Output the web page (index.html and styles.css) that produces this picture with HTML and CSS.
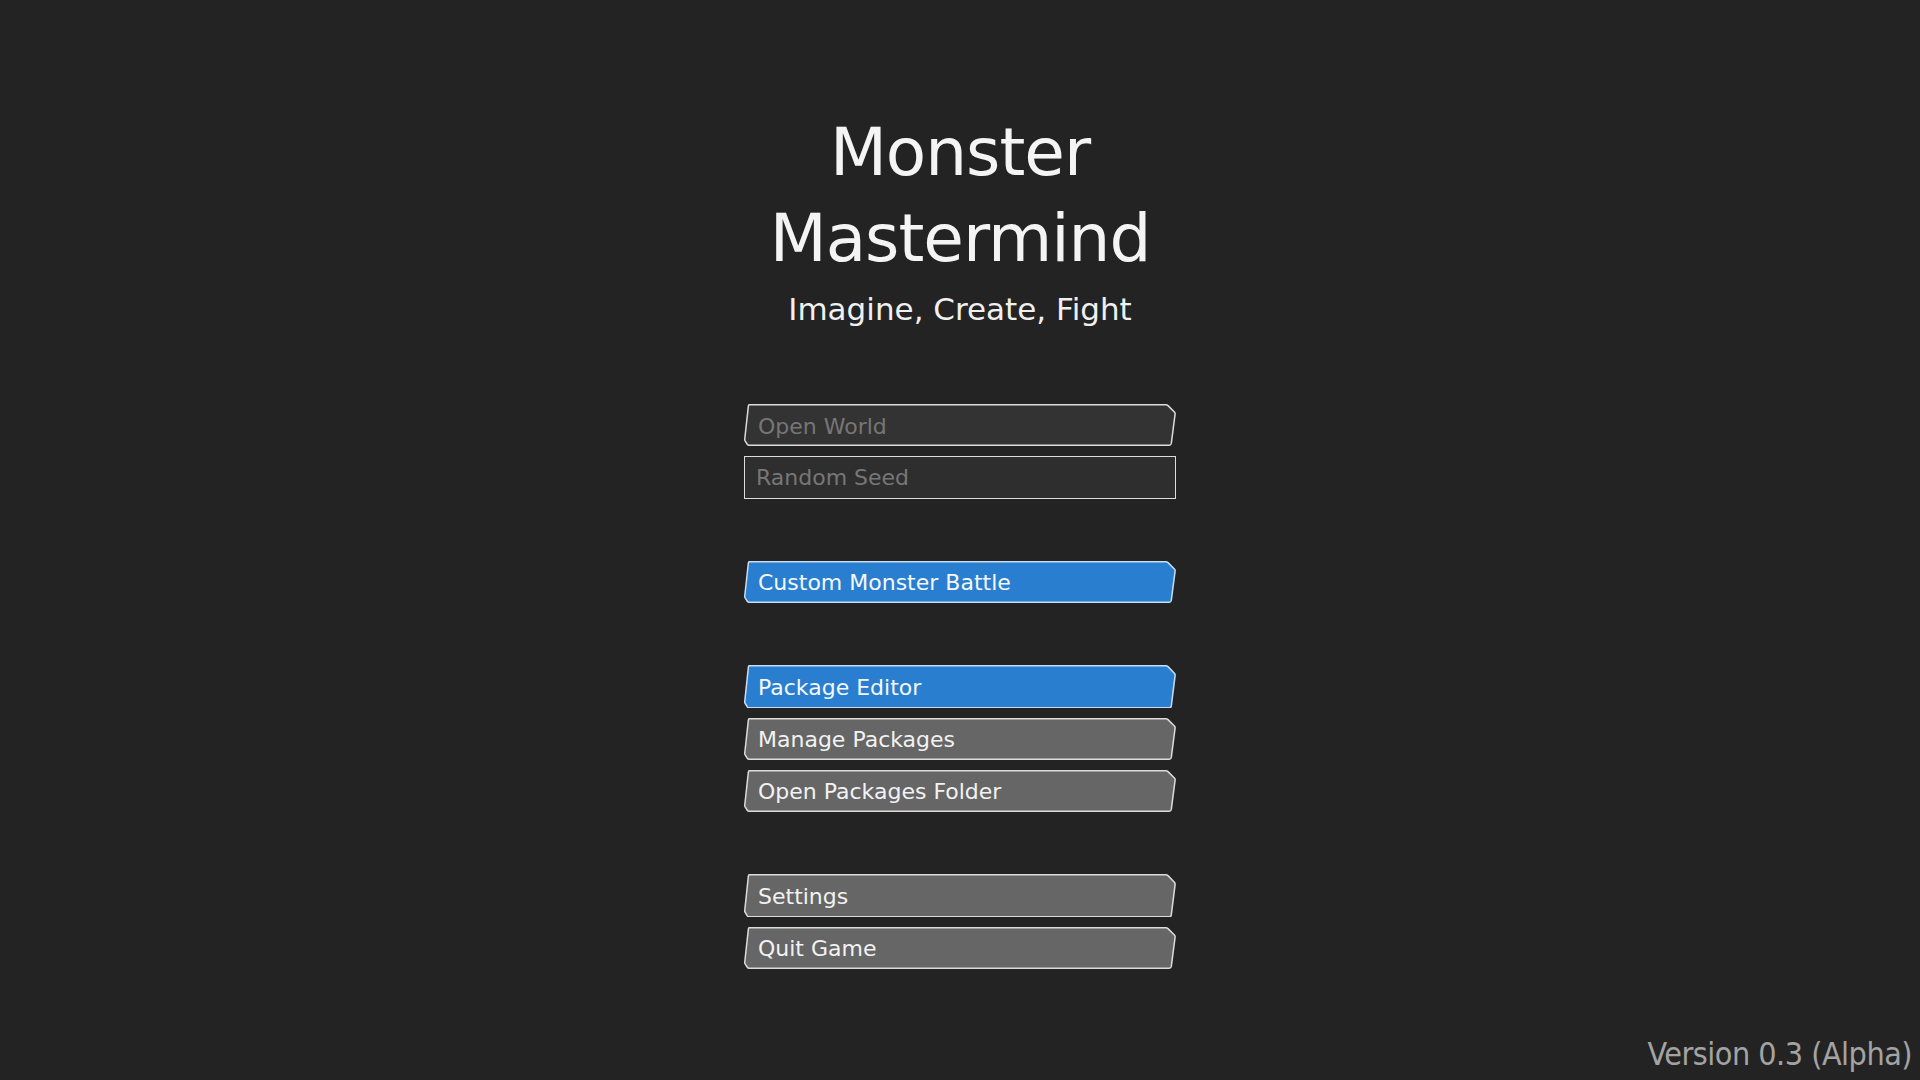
FILE: index.html
```html
<!DOCTYPE html>
<html>
<head>
<meta charset="utf-8">
<link rel="stylesheet" href="styles.css">
</head>
<body>
<main class="menu">
  <h1 class="title">Monster<br>Mastermind</h1>
  <p class="subtitle">Imagine, Create, Fight</p>
  <div class="group">
    <div class="btn btn-disabled">Open World</div>
    <div class="seed">Random Seed</div>
  </div>
  <div class="group">
    <div class="btn btn-blue">Custom Monster Battle</div>
  </div>
  <div class="group">
    <div class="btn btn-blue">Package Editor</div>
    <div class="btn btn-gray">Manage Packages</div>
    <div class="btn btn-gray">Open Packages Folder</div>
  </div>
  <div class="group">
    <div class="btn btn-gray">Settings</div>
    <div class="btn btn-gray">Quit Game</div>
  </div>
</main>
<div class="version">Version 0.3 (Alpha)</div>
</body>
</html>
```
FILE: styles.css
```css
html, body {
  margin: 0;
  padding: 0;
  width: 1920px;
  height: 1080px;
  background: #232323;
  overflow: hidden;
  font-family: "DejaVu Sans", sans-serif;
  color: #ffffff;
}
body {
  position: relative;
}
.menu {
  display: flex;
  flex-direction: column;
  align-items: center;
  padding-top: 110px;
}
.title {
  margin: 0;
  font-size: 66px;
  line-height: 86px;
  letter-spacing: -1px;
  font-weight: normal;
  text-align: center;
  color: #f4f4f4;
}
.subtitle {
  margin: 7px 0 0;
  font-size: 31px;
  line-height: 40px;
  color: #f0f0f0;
}
.group {
  display: flex;
  flex-direction: column;
  gap: 10px;
  width: 432px;
  margin-top: 62px;
}
.group:first-of-type {
  margin-top: 75px;
}
.btn, .seed {
  box-sizing: border-box;
  height: 42.4px;
  padding-left: 14px;
  font-size: 22px;
  white-space: nowrap;
}
.btn {
  padding-top: 1.5px;
  line-height: 41px;
  background-repeat: no-repeat;
  background-size: 100% 100%;
}
.btn-gray {
  color: #f2f2f2;
  background-image: url("data:image/svg+xml;utf8,<svg xmlns='http://www.w3.org/2000/svg' viewBox='0 0 432 42' preserveAspectRatio='none'><path d='M5,0.75 L422,0.75 Q423,0.75 424,1.6 L430.4,8 Q431.3,9 431.1,10.2 L427.3,39.4 Q427,41.25 425.2,41.25 L5,41.25 Q4,41.25 3.3,40.3 L1,36.6 Q0.6,35.9 0.75,35 L4.4,1.9 Q4.6,0.75 5,0.75 Z' fill='%23666666' stroke='%23dcdcdc' stroke-width='1.5'/></svg>");
}
.btn-blue {
  color: #f4f8fc;
  background-image: url("data:image/svg+xml;utf8,<svg xmlns='http://www.w3.org/2000/svg' viewBox='0 0 432 42' preserveAspectRatio='none'><path d='M5,0.75 L422,0.75 Q423,0.75 424,1.6 L430.4,8 Q431.3,9 431.1,10.2 L427.3,39.4 Q427,41.25 425.2,41.25 L5,41.25 Q4,41.25 3.3,40.3 L1,36.6 Q0.6,35.9 0.75,35 L4.4,1.9 Q4.6,0.75 5,0.75 Z' fill='%232a7ecf' stroke='%23c6def2' stroke-width='1.5'/></svg>");
}
.btn-disabled {
  color: #767676;
  background-image: url("data:image/svg+xml;utf8,<svg xmlns='http://www.w3.org/2000/svg' viewBox='0 0 432 42' preserveAspectRatio='none'><path d='M5,0.75 L422,0.75 Q423,0.75 424,1.6 L430.4,8 Q431.3,9 431.1,10.2 L427.3,39.4 Q427,41.25 425.2,41.25 L5,41.25 Q4,41.25 3.3,40.3 L1,36.6 Q0.6,35.9 0.75,35 L4.4,1.9 Q4.6,0.75 5,0.75 Z' fill='%23333333' stroke='%23dcdcdc' stroke-width='1.5'/></svg>");
}
.seed {
  background: #2e2e2e;
  border: 1.5px solid #dcdcdc;
  color: #777777;
  padding-left: 11px;
  padding-top: 1.5px;
  line-height: 38px;
}
.version {
  position: absolute;
  right: 8px;
  bottom: 4px;
  font-family: "DejaVu Sans Condensed", "DejaVu Sans", sans-serif;
  font-stretch: condensed;
  font-size: 32px;
  letter-spacing: -0.5px;
  line-height: 44px;
  color: #a3a3a3;
}
```
